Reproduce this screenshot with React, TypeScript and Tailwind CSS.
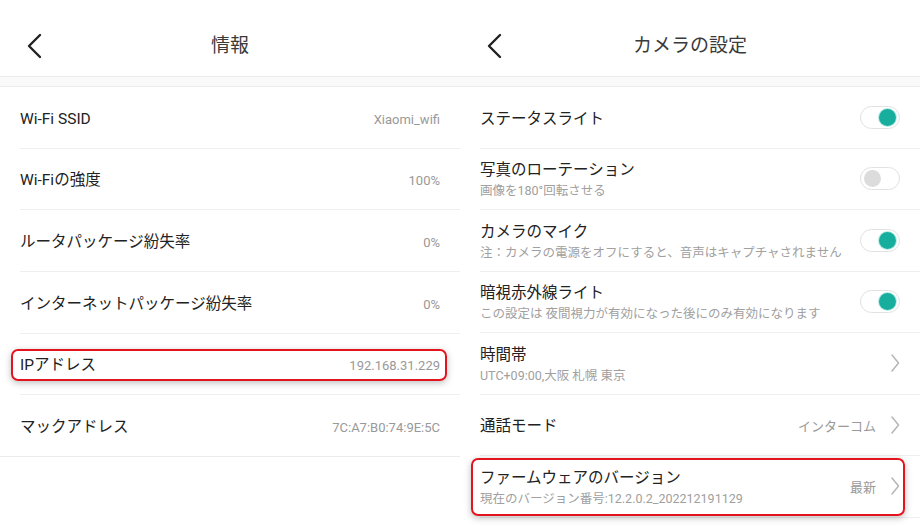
import React from 'react';

const font = { fontFamily: 'Roboto, "Noto Sans CJK JP", "Noto Sans", sans-serif' };

function BackArrow() {
  return (
    <svg width="18" height="26" viewBox="0 0 18 26" className="absolute left-[26px] top-[33px]">
      <path d="M14 2 L3 13 L14 24" fill="none" stroke="#222" strokeWidth="2.4" strokeLinecap="round" strokeLinejoin="round" />
    </svg>
  );
}

function Chevron() {
  return (
    <svg width="10" height="20" viewBox="0 0 10 20" className="shrink-0">
      <path d="M2 2 L8.5 10 L2 18" fill="none" stroke="#b5b5b5" strokeWidth="1.5" strokeLinecap="round" strokeLinejoin="round" />
    </svg>
  );
}

function Toggle({ on }: { on: boolean }) {
  return (
    <div className="w-[40px] h-[23px] rounded-full border border-[#e2e2e2] bg-white flex items-center px-[3px] shrink-0">
      {on ? (
        <div className="ml-auto w-[17px] h-[17px] rounded-full bg-[#17ae9e] shadow-[0_0_0_1px_#b8ece6]" />
      ) : (
        <div className="w-[17px] h-[17px] rounded-full bg-[#dcdcdc]" />
      )}
    </div>
  );
}

function Highlight({ className }: { className: string }) {
  return (
    <div
      className={`absolute rounded-[7px] border-2 border-[#e3141e] shadow-[0_2px_7px_rgba(0,0,0,0.25)] pointer-events-none ${className}`}
    />
  );
}

function Header({ title }: { title: string }) {
  return (
    <>
      <div className="relative h-[77px] border-b border-[#ececec] flex items-center justify-center">
        <BackArrow />
        <span className="text-[19px] text-[#3a3a3a] mt-[16px]">{title}</span>
      </div>
      <div className="h-[10px] bg-[#fafafa] border-b border-[#ececec]" />
    </>
  );
}

const infoRows = [
  { label: 'Wi-Fi SSID', value: 'Xiaomi_wifi' },
  { label: 'Wi-Fiの強度', value: '100%' },
  { label: 'ルータパッケージ紛失率', value: '0%' },
  { label: 'インターネットパッケージ紛失率', value: '0%' },
  { label: 'IPアドレス', value: '192.168.31.229', mark: true },
  { label: 'マックアドレス', value: '7C:A7:B0:74:9E:5C' },
];

function InfoPanel() {
  return (
    <div className="w-[460px] h-[530px] bg-white shrink-0">
      <Header title="情報" />
      {infoRows.map((r, i) => (
        <div key={r.label} className={`relative h-[61.7px] ${i === infoRows.length - 1 ? 'border-b border-[#ececec]' : 'pl-5'}`}>
          <div className={`h-full flex items-center justify-between pr-5 pt-[4px] ${i === infoRows.length - 1 ? 'pl-5' : 'border-b border-[#efefef]'}`}>
            <span className="text-[15.5px] text-[#222]">{r.label}</span>
            <span className="text-[13px] text-[#999]">{r.value}</span>
          </div>
          {r.mark && <Highlight className="left-[11px] right-[13px] top-[15px] h-[32px]" />}
        </div>
      ))}
    </div>
  );
}

type SetRow = { label: string; sub?: string; toggle?: boolean; on?: boolean; value?: string; chevron?: boolean; mark?: boolean };

const setRows: SetRow[] = [
  { label: 'ステータスライト', toggle: true, on: true },
  { label: '写真のローテーション', sub: '画像を180°回転させる', toggle: true, on: false },
  { label: 'カメラのマイク', sub: '注：カメラの電源をオフにすると、音声はキャプチャされません', toggle: true, on: true },
  { label: '暗視赤外線ライト', sub: 'この設定は 夜間視力が有効になった後にのみ有効になります', toggle: true, on: true },
  { label: '時間帯', sub: 'UTC+09:00,大阪 札幌 東京', chevron: true },
  { label: '通話モード', value: 'インターコム', chevron: true },
  { label: 'ファームウェアのバージョン', sub: '現在のバージョン番号:12.2.0.2_202212191129', value: '最新', chevron: true, mark: true },
];

function SettingsPanel() {
  return (
    <div className="w-[460px] h-[530px] bg-white shrink-0">
      <Header title="カメラの設定" />
      {setRows.map(r => (
        <div key={r.label} className="relative h-[61.5px] pl-5">
          <div className="h-full flex items-center justify-between pr-5 border-b border-[#efefef]">
            <div className="flex flex-col pt-[3px]">
              <span className="text-[15.5px] text-[#222] leading-[22px]">{r.label}</span>
              {r.sub && <span className="text-[12.5px] text-[#a0a0a0] leading-[20px]">{r.sub}</span>}
            </div>
            <div className="flex items-center gap-[14px]">
              {r.value && <span className="text-[13px] text-[#999] pt-[3px]">{r.value}</span>}
              {r.toggle && <Toggle on={!!r.on} />}
              {r.chevron && <Chevron />}
            </div>
          </div>
          {r.mark && <Highlight className="left-[11px] right-[15px] top-[2px] h-[58px]" />}
        </div>
      ))}
    </div>
  );
}

export default function App() {
  return (
    <div className="w-[920px] h-[530px] flex bg-white overflow-hidden" style={font}>
      <InfoPanel />
      <SettingsPanel />
    </div>
  );
}
